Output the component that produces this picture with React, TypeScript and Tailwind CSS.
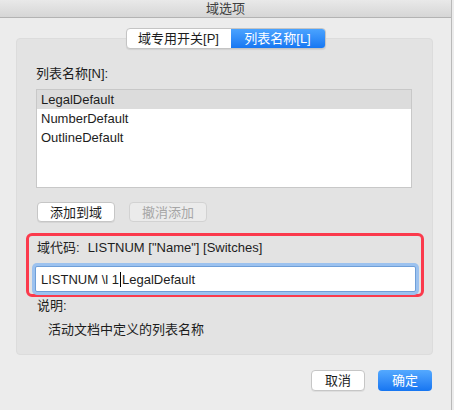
import React from "react";

const font = "font-['Liberation_Sans','Noto_Sans_CJK_SC',sans-serif]";

const items = ["LegalDefault", "NumberDefault", "OutlineDefault"];

export default function App() {
  return (
    <div className={`w-[454px] h-[410px] bg-[#ececec] text-[13px] text-[#1d1d1d] ${font} flex`}>
      <div className="w-[452px] h-full flex flex-col border-r border-[#b9b9b9]">
        {/* title bar */}
        <div className="h-[18px] shrink-0 bg-gradient-to-b from-[#e9e9e9] to-[#d6d6d6] border-b border-[#b3b3b3] flex items-center justify-center text-[13px] text-[#404040] leading-none">
          域选项
        </div>

        {/* tabs */}
        <div className="pt-[10px] flex justify-center relative z-10 -mb-[11px]">
          <div className="flex h-[21px] rounded-[4px] border border-[#c4c4c4] bg-white shadow-[0_1px_1px_rgba(0,0,0,0.08)] overflow-hidden leading-none">
            <div className="w-[104px] flex items-center justify-center text-[#1d1d1d]">域专用开关[P]</div>
            <div className="w-[94px] flex items-center justify-center text-white bg-gradient-to-b from-[#4aa3ff] to-[#1677f2]">
              列表名称[L]
            </div>
          </div>
        </div>

        {/* group box */}
        <div className="ml-[16px] w-[417px] h-[317px] rounded-[4px] bg-[#e3e3e3] border border-[#dcdcdc] flex flex-col pt-[27px]">
          <div className="ml-[19px] leading-[16px]">列表名称[N]:</div>

          <div className="ml-[19px] mt-[7px] w-[376px] h-[99px] bg-white border border-[#c8c8c8] flex flex-col">
            {items.map((it, i) => (
              <div
                key={it}
                className={`h-[19px] pl-[4px] flex items-center leading-none ${i === 0 ? "bg-[#dcdcdc]" : ""}`}
              >
                {it}
              </div>
            ))}
          </div>

          <div className="ml-[20px] mt-[14px] flex gap-[14px]">
            <div className="w-[78px] h-[20px] rounded-[4px] bg-white border border-[#c6c6c6] shadow-[0_1px_0_rgba(0,0,0,0.06)] flex items-center justify-center leading-none">
              添加到域
            </div>
            <div className="w-[78px] h-[20px] rounded-[4px] bg-[#ebebeb] border border-[#d2d2d2] flex items-center justify-center leading-none text-[#a6a6a6]">
              撤消添加
            </div>
          </div>

          {/* highlighted field code area */}
          <div className="ml-[9px] mt-[11px] w-[398px] h-[64px] rounded-[6px] border-[3px] border-[#fb3a4c] flex flex-col pl-[8px] pt-[4px]">
            <div className="flex gap-[8px] leading-[16px]">
              <span>域代码:</span>
              <span>LISTNUM ["Name"] [Switches]</span>
            </div>
            <div className="mt-[10px] ml-[-2px] w-[381px] h-[26px] bg-white border border-[#6f9fd8] ring-[3px] ring-[#9cc2ef] rounded-[2px] flex items-center pl-[5px] leading-none">
              <span>LISTNUM \l 1</span>
              <span className="w-px h-[15px] bg-black ml-[1px] mr-[1px]" />
              <span>LegalDefault</span>
            </div>
          </div>

          <div className="ml-[20px] mt-[1px] leading-[16px]">说明:</div>
          <div className="ml-[31px] mt-[8px] leading-[16px]">活动文档中定义的列表名称</div>
        </div>

        {/* footer buttons */}
        <div className="mt-[15px] flex justify-end gap-[13px] pr-[19px]">
          <div className="w-[54px] h-[21px] rounded-[4px] bg-white border border-[#c6c6c6] shadow-[0_1px_0_rgba(0,0,0,0.06)] flex items-center justify-center leading-none">
            取消
          </div>
          <div className="w-[54px] h-[21px] rounded-[4px] bg-gradient-to-b from-[#54a9ff] to-[#1575f1] text-white flex items-center justify-center leading-none">
            确定
          </div>
        </div>
      </div>
    </div>
  );
}
